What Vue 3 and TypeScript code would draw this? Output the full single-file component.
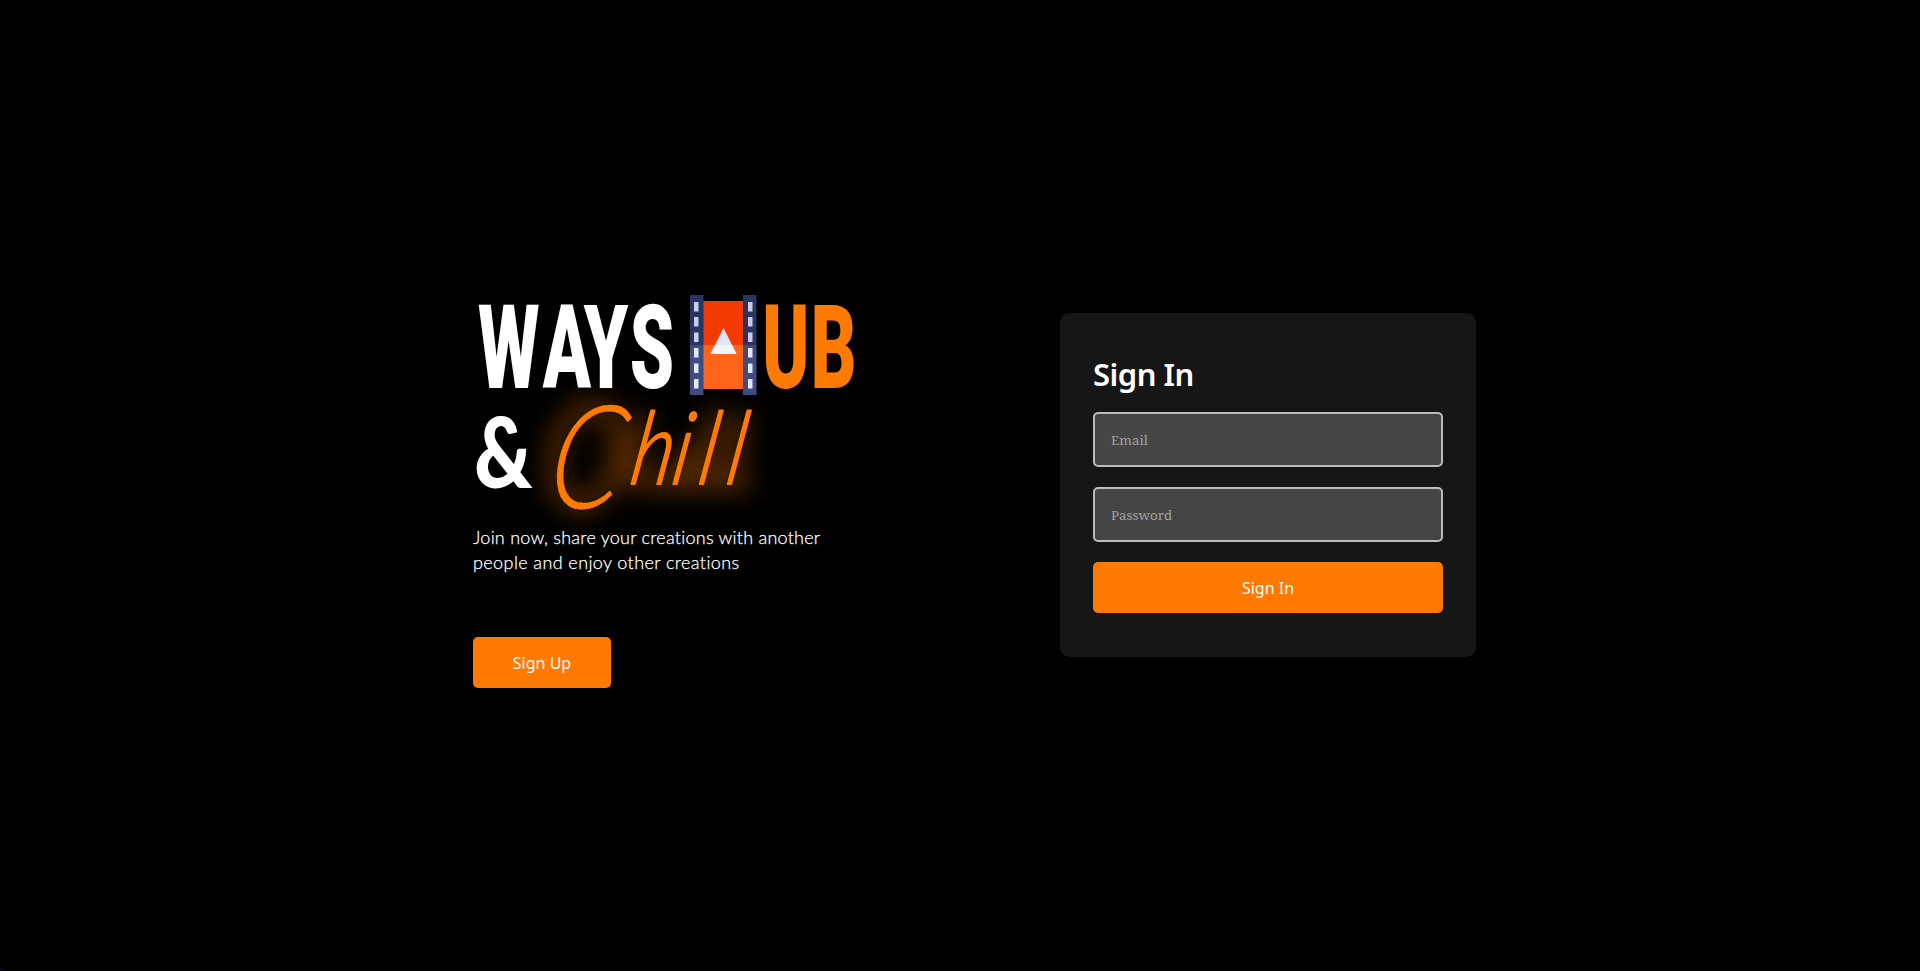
<script setup lang="ts">
import { ref } from 'vue'

const email = ref('')
const password = ref('')
const holes = [302, 317, 332.5, 348, 363.5, 379]
const strips = [
  { x: 690, hole: 694 },
  { x: 743, hole: 748 },
]
</script>

<template>
  <main class="page">
    <section class="intro">
      <svg class="logo" width="400" height="231" viewBox="473 290 400 231">
        <defs>
          <filter id="glow" x="-30%" y="-40%" width="160%" height="190%">
            <feGaussianBlur stdDeviation="13" />
          </filter>
        </defs>
        <g class="halo" filter="url(#glow)">
          <ellipse cx="586" cy="456" rx="31" ry="50" transform="rotate(12 586 456)" />
          <path d="M630 476L642 420M672 478L690 450M702 474L715 415M730 474L742 420M635 482H745" />
        </g>
        <g class="block">
          <text class="white" transform="translate(0 388) scale(.605 1)" x="790 897 965 1041">WAYS</text>
          <text class="orange" transform="translate(0 388) scale(.605 1)" x="1260 1340">UB</text>
        </g>
        <g class="film">
          <path d="M703 301h41v88h-41z" fill="#f33a00" />
          <path d="M703 345h41v44h-41z" fill="#ff641a" />
          <path d="M723.5 328l13 26h-26z" fill="#dfe6f5" />
          <path d="M715 345h17l4.500 9h-26z" fill="#f2f7ff" />
          <g v-for="s in strips" :key="s.x">
            <rect :x="s.x" y="295" width="13.500" height="50" fill="#293462" />
            <rect :x="s.x" y="345" width="13.500" height="50" fill="#424b80" />
            <rect
              v-for="(y, i) in holes"
              :key="y"
              :x="s.hole"
              :y="y"
              width="4.500"
              height="9.500"
              :fill="i < 3 ? '#c9cfe0' : '#e1e8f7'"
            />
          </g>
        </g>
        <text class="amp" transform="translate(474 488) scale(.82 1)">&amp;</text>
        <text class="script" transform="translate(0 484) scale(.8 1) skewX(-12)">
          <tspan class="cap" x="685" y="24">C</tspan><tspan x="785 837 870 905" y="0">hill</tspan>
        </text>
      </svg>
      <p class="lead"><span>Join now, share your creations with another</span><br /><span class="wide">people and enjoy other creations</span></p>
      <button class="btn signup" type="button">Sign Up</button>
    </section>

    <form class="card" @submit.prevent>
      <h1>Sign In</h1>
      <input v-model="email" type="email" placeholder="Email" />
      <input v-model="password" type="password" placeholder="Password" />
      <button class="btn" type="submit">Sign In</button>
    </form>
  </main>
</template>

<style>
body {
  background: #000;
}
</style>

<style scoped>
.page {
  box-sizing: border-box;
  height: 971px;
  padding-left: 473px;
  display: flex;
  align-items: flex-start;
  gap: 187px;
  background: radial-gradient(circle at 8px 0, transparent 8px, #0a0428 9px, #000 12px) 0 100% / 8px 8px no-repeat #000;
}
.intro {
  width: 400px;
  padding-top: 290px;
}
.logo {
  display: block;
  overflow: visible;
}
.block text {
  font: 900 117px Roboto, sans-serif;
}
.white {
  fill: #fff;
}
.orange {
  fill: #ff7a00;
}
.amp {
  font: 900 98px Lato, sans-serif;
  fill: #fff;
}
.script {
  font: italic 300 101px Lato, sans-serif;
  fill: #ff7a00;
  stroke: #ff7a00;
  stroke-width: 2px;
  stroke-linejoin: round;
}
.cap {
  font-size: 144px;
  stroke-width: 0.5px;
}
.halo {
  fill: none;
  stroke: #ff7a00;
  stroke-width: 14px;
  stroke-linecap: round;
  opacity: 0.42;
}
.lead {
  margin: 4px 0 0;
  font: 300 18px/25px Lato, sans-serif;
  letter-spacing: 0.24px;
  color: #fff;
  -webkit-text-stroke: 0.25px #fff;
  white-space: nowrap;
}
.wide {
  letter-spacing: 0.4px;
}
.btn {
  display: block;
  width: 100%;
  height: 51px;
  padding: 0;
  border: 0;
  border-radius: 5px;
  background: #ff7a00;
  color: #fff;
  font: 400 16px 'Noto Sans', sans-serif;
}
.signup {
  width: 138px;
  margin-top: 62px;
}
.card {
  box-sizing: border-box;
  width: 416px;
  height: 344px;
  margin-top: 313px;
  padding: 37px 33px 0;
  border-radius: 10px;
  background: #161616;
}
h1 {
  margin: 0 0 14px;
  font: 600 31px/48px 'Noto Sans', sans-serif;
  letter-spacing: -0.5px;
  color: #fff;
}
input {
  display: block;
  box-sizing: border-box;
  width: 350px;
  height: 55px;
  margin: 0 0 20px;
  padding: 0 16px;
  border: 2px solid #bcbcbc;
  border-radius: 5px;
  background: #454545;
  color: #fff;
  font: 13.333px 'Noto Serif', 'DejaVu Serif', serif;
  outline: none;
}
input::placeholder {
  color: #a3a3a3;
  opacity: 1;
}
</style>
